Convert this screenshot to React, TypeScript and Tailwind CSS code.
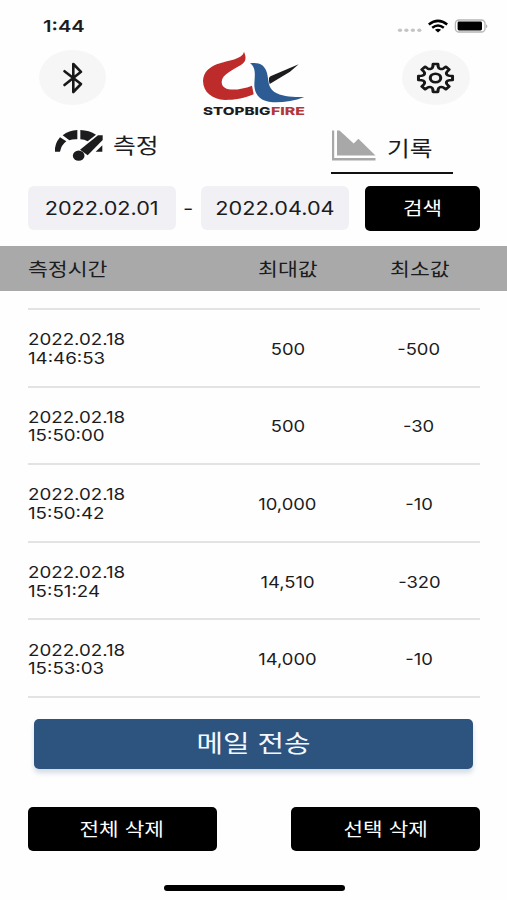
import type { ReactNode } from "react";
import { clsx } from "clsx";

const records = [
  { date: "2022.02.18", time: "14:46:53", max: "500", min: "-500" },
  { date: "2022.02.18", time: "15:50:00", max: "500", min: "-30" },
  { date: "2022.02.18", time: "15:50:42", max: "10,000", min: "-10" },
  { date: "2022.02.18", time: "15:51:24", max: "14,510", min: "-320" },
  { date: "2022.02.18", time: "15:53:03", max: "14,000", min: "-10" },
];

// Wide lettering used across the whole app
const Wide = ({ children, className }: { children: ReactNode; className?: string }) => (
  <span className={clsx("inline-block whitespace-nowrap", className)}>{children}</span>
);

const gearPath = () => {
  const points: string[] = [];
  for (let i = 0; i < 8; i++) {
    const base = (i * Math.PI) / 4 - Math.PI / 2;
    const at = (r: number, a: number) =>
      `${(r * Math.cos(base + a)).toFixed(2)} ${(r * Math.sin(base + a)).toFixed(2)}`;
    points.push(`${i === 0 ? "M" : "L"}${at(14.1, -0.14)}`);
    points.push(`L${at(14.1, 0.14)}`);
    points.push(`L${at(11.6, 0.19)}`);
    points.push(`C${at(9.4, 0.27)} ${at(9.4, Math.PI / 4 - 0.27)} ${at(11.6, Math.PI / 4 - 0.19)}`);
  }
  return points.join(" ") + "Z";
};

const StatusBar = () => (
  <div className="flex h-[50px] items-start justify-between pl-[43px] pr-[18px] pt-[16px]">
    <Wide className="origin-left scale-x-[1.22] text-[16.5px] font-semibold leading-[21px]">1:44</Wide>
    <svg width="92" height="16" viewBox="397 18 92 16" className="mt-[2px]">
      <g fill="#c4c4c4">
        <ellipse cx="400" cy="30.3" rx="2.1" ry="1.7" />
        <ellipse cx="406.4" cy="30.3" rx="2.1" ry="1.7" />
        <ellipse cx="412.9" cy="30.3" rx="2.1" ry="1.7" />
        <ellipse cx="419.3" cy="30.3" rx="2.1" ry="1.7" />
      </g>
      <g fill="none" stroke="#000" strokeWidth="2.5">
        <path d="M428.8 24.5Q438 17.2 447.2 24.5" />
        <path d="M432.2 27.8Q438 23.2 443.8 27.8" />
      </g>
      <path d="M434.9 29.8Q438 27.7 441.1 29.8L438 32.4Z" fill="#000" />
      <rect x="455.4" y="20" width="29.6" height="12" rx="3.6" fill="#fff" stroke="#b5b5b5" strokeWidth="1.3" />
      <rect x="457.6" y="21.6" width="24.4" height="8.8" rx="1.4" fill="#000" />
      <path d="M486.2 24.2Q488.4 26 486.2 28.2Z" fill="#999" />
    </svg>
  </div>
);

const Logo = () => (
  <svg width="130" height="75" viewBox="0 0 390 225">
    <path
      d="M162 20C170 38 168 50 154 59C126 76 96 88 95 110C95 141 143 138 186 122L191 148C160 161 133 165 106 165C65 163 40 141 39 108C40 82 58 66 82 57C116 45 156 44 162 20Z"
      fill="#bd2c2b"
    />
    <path
      d="M180 55C206 51 224 58 231 84C237 108 233 126 253 141C275 155 308 157 343 156C312 168 281 173 249 172C214 169 195 153 193 122C193 94 201 70 180 55Z"
      fill="#2d5b93"
    />
    <path d="M237 99Q239 95 243 93L326 58L300 80L239 117Q236 107 237 99Z" fill="#1c1c1e" />
    <g fontFamily="Inter, sans-serif" fontWeight="800" fontSize="32">
      <text x="39" y="209" fill="#1c1c1e" textLength="202" lengthAdjust="spacingAndGlyphs">STOPBIG</text>
      <text x="243" y="209" fill="#b3373a" textLength="102" lengthAdjust="spacingAndGlyphs">FIRE</text>
    </g>
  </svg>
);

const Header = () => (
  <div className="flex h-[70px] justify-between pl-[39px] pr-[37px]">
    <button className="flex h-[55px] w-[67px] items-center justify-center rounded-[50%] bg-[#f6f6f6]">
      <svg width="24" height="34" viewBox="0 0 24 34">
        <path
          d="M3.5 10.2L20 23L12.3 31V3L20 10.8L3.5 24"
          fill="none"
          stroke="#18181a"
          strokeWidth="2.6"
          strokeLinejoin="round"
          strokeLinecap="round"
        />
      </svg>
    </button>
    <div className="-mt-[5px] ml-[1px]">
      <Logo />
    </div>
    <button className="flex h-[55px] w-[68px] items-center justify-center rounded-[50%] bg-[#f6f6f6] pr-[1.5px]">
      <svg width="39" height="32" viewBox="-16 -16 32 32" preserveAspectRatio="none">
        <g fill="none" stroke="#18181a" strokeWidth="2.5" strokeLinejoin="round">
          <path d={gearPath()} />
          <circle r="4.3" />
        </g>
      </svg>
    </button>
  </div>
);

const Tabs = () => (
  <div className="flex h-[55px] pl-[54px] pt-[9px] text-[21px]">
    <button className="flex h-[33px] w-[277px]">
      <svg width="50" height="33" viewBox="102 27 150 99" fill="#1c1c1e">
        <path d="M105 95Q103 72 120 52L139 64Q124 75 120 95Z" />
        <path d="M128 46Q147 31 172 30V58Q158 57 148 61Z" />
        <path d="M181 30Q208 31 228 44L203 64Q193 58 181 58Z" />
        <path d="M234 46H248V60L203 106L180 89Z" />
        <path d="M247 76V95H227Z" />
        <ellipse cx="176" cy="107" rx="17.5" ry="15.5" />
      </svg>
      <Wide className="ml-[9px] origin-left scale-x-[1.18] leading-[33px]">측정</Wide>
    </button>
    <button className="flex h-[45px] w-[122px] border-b-[2.5px] border-[#111]">
      <svg width="46" height="33" viewBox="331 129 46 33" fill="#a8a8a8">
        <path d="M332 130.5H334.2V158H375.5V160.6H332Z" />
        <path d="M337 130.5H339.5L353.7 143.5L358.4 138.7L375.5 155.5H337Z" />
      </svg>
      <Wide className="ml-[9.5px] origin-left scale-x-[1.18] leading-[39px]">기록</Wide>
    </button>
  </div>
);

const DateBox = ({ value }: { value: string }) => (
  <div className="flex h-[44px] w-[148px] items-center justify-center rounded-md bg-[#f1f1f5] pt-[2px]">
    <Wide className="scale-x-[1.17] text-[18.5px]">{value}</Wide>
  </div>
);

const BlackButton = ({ label, className }: { label: string; className: string }) => (
  <button className={clsx("flex items-center justify-center rounded-[5px] bg-black text-[18px] text-white", className)}>
    <Wide className="scale-x-[1.18]">{label}</Wide>
  </button>
);

const App = () => {
  return (
    <div className="flex h-[900px] w-[507px] flex-col overflow-hidden bg-[#fefefe] font-['Inter','Noto_Sans_CJK_KR',sans-serif] text-[#1c1c1e]">
      <StatusBar />
      <Header />
      <Tabs />

      <div className="flex h-[71px] items-start pl-[28px] pt-[11px]">
        <DateBox value="2022.02.01" />
        <span className="flex h-[44px] w-[25px] items-center justify-center text-[18px]">
          <Wide className="scale-x-[1.25]">-</Wide>
        </span>
        <DateBox value="2022.04.04" />
        <BlackButton label="검색" className="-mt-[0.5px] ml-[16px] h-[45px] w-[115px]" />
      </div>

      <div className="flex h-[45px] items-center bg-[#a9a9a9] pl-[28px] pt-px text-[18px]">
        <div className="w-[193.5px]">
          <Wide className="origin-left scale-x-[1.2]">측정시간</Wide>
        </div>
        <div className="w-[132px] text-center">
          <Wide className="scale-x-[1.2]">최대값</Wide>
        </div>
        <div className="w-[132px] text-center">
          <Wide className="scale-x-[1.2]">최소값</Wide>
        </div>
      </div>

      <div className="mx-[28px] mr-[27px] mt-[17px] border-t-2 border-[#e3e3e4] text-[16px]">
        {records.map((r) => (
          <div key={r.time} className="flex h-[77.6px] items-center border-b-2 border-[#e3e3e4] pt-[2px]">
            <div className="w-[193.5px] shrink-0 leading-[18.5px]">
              <Wide className="origin-left scale-x-[1.17]">
                {r.date}
                <br />
                {r.time}
              </Wide>
            </div>
            <div className="w-[132px] shrink-0 text-center">
              <Wide className="scale-x-[1.15]">{r.max}</Wide>
            </div>
            <div className="w-[131px] shrink-0 text-center">
              <Wide className="scale-x-[1.15]">{r.min}</Wide>
            </div>
          </div>
        ))}
      </div>

      <button className="ml-[34px] mt-[21.5px] flex h-[50px] w-[439px] shrink-0 items-center justify-center rounded-[5px] bg-[#2d537f] text-[24px] text-[#f2f8ff] shadow-[0_4px_5px_rgba(45,83,127,0.2)]">
        <Wide className="scale-x-[1.2]">메일 전송</Wide>
      </button>

      <div className="mt-[37.5px] flex justify-between pl-[27.5px] pr-[27px]">
        <BlackButton label="전체 삭제" className="h-[44.5px] w-[189px]" />
        <BlackButton label="선택 삭제" className="h-[44.5px] w-[189px]" />
      </div>

      <div className="ml-[164px] mt-[34px] h-[5.5px] w-[181px] rounded-full bg-black" />
    </div>
  );
};

export default App;
